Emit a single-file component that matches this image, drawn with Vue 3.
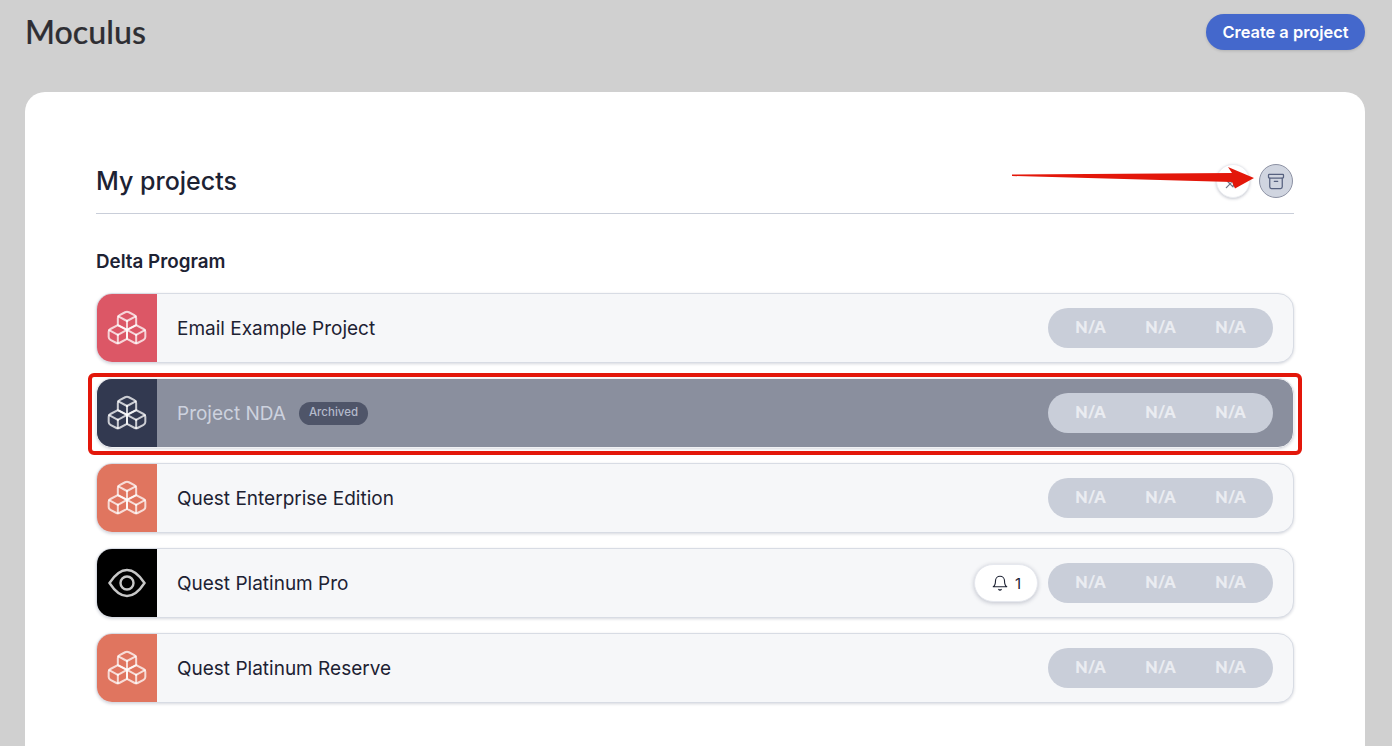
<script setup>
const rows = [
  { name: 'Email Example Project', color: '#dc5766', icon: 'boxes' },
  { name: 'Project NDA', color: '#323950', icon: 'boxes', archived: true },
  { name: 'Quest Enterprise Edition', color: '#e0755f', icon: 'boxes' },
  { name: 'Quest Platinum Pro', color: '#000000', icon: 'eye', alerts: 1 },
  { name: 'Quest Platinum Reserve', color: '#e0755f', icon: 'boxes' },
]
</script>

<template>
  <div class="page">
    <header class="top">
      <h1 class="brand">Moculus</h1>
      <button class="create">Create a project</button>
    </header>

    <main class="card">
      <div class="head">
        <h2>My projects</h2>
        <div class="tools">
          <button class="tool">
            <svg width="20" height="20" viewBox="0 0 24 24" fill="none" stroke="#6d7486" stroke-width="1.5" stroke-linecap="round" stroke-linejoin="round">
              <path d="M4 20l6-6" />
              <path d="M14 4l6 6-3 1-4 4-1 4-7-7 4-1 4-4z" />
            </svg>
          </button>
          <button class="tool active">
            <svg width="20" height="20" viewBox="0 0 24 24" fill="none" stroke="#56617f" stroke-width="1.5" stroke-linecap="round" stroke-linejoin="round">
              <rect x="3" y="4" width="18" height="4.5" rx="1" />
              <path d="M4.5 8.5V19a2 2 0 0 0 2 2h11a2 2 0 0 0 2-2V8.5" />
              <path d="M10 12.5h4" />
            </svg>
          </button>
          <svg class="arrow" width="246" height="30" viewBox="0 0 246 30">
            <path d="M0 10.5 L0 12 L220 18 L223 24.5 L242 14 L216 3 L220 9 Z" fill="#e3170a" />
          </svg>
        </div>
      </div>

      <h3 class="group">Delta Program</h3>

      <ul class="rows">
        <li v-for="row in rows" :key="row.name" class="row" :class="{ archived: row.archived }">
          <div class="thumb" :style="{ background: row.color }">
            <svg v-if="row.icon === 'boxes'" class="boxes" viewBox="0 0 24 24" preserveAspectRatio="none" fill="none" stroke="#fff" stroke-opacity="0.75" stroke-linecap="round" stroke-linejoin="round">
              <path d="M2.97 12.92A2 2 0 0 0 2 14.63v3.24a2 2 0 0 0 .97 1.71l3 1.8a2 2 0 0 0 2.06 0L12 19v-5.5l-5-3-4.03 2.42Z" />
              <path d="m7 16.5-4.74-2.85" />
              <path d="m7 16.5 5-3" />
              <path d="M7 16.5v5.17" />
              <path d="M12 13.5V19l3.97 2.38a2 2 0 0 0 2.06 0l3-1.8a2 2 0 0 0 .97-1.71v-3.24a2 2 0 0 0-.97-1.71L17 10.5l-5 3Z" />
              <path d="m17 16.5-5-3" />
              <path d="m17 16.5 4.74-2.85" />
              <path d="M17 16.5v5.17" />
              <path d="M7.97 4.42A2 2 0 0 0 7 6.13v4.37l5 3 5-3V6.13a2 2 0 0 0-.97-1.71l-3-1.8a2 2 0 0 0-2.06 0l-3 1.8Z" />
              <path d="M12 8 7.26 5.15" />
              <path d="m12 8 4.74-2.85" />
              <path d="M12 13.5V8" />
            </svg>
            <svg v-else class="eye" width="38" height="30" viewBox="0 0 38 30" fill="none" stroke="#fff" stroke-opacity="0.78" stroke-width="2.4">
              <path d="M1.5 15 C8 5 14 2 19 2 C24 2 30 5 36.5 15 C30 25 24 28 19 28 C14 28 8 25 1.5 15 Z" />
              <circle cx="19" cy="15" r="6.5" />
            </svg>
          </div>
          <div class="name">{{ row.name }}</div>
          <span v-if="row.archived" class="tag">Archived</span>
          <div class="spacer"></div>
          <button v-if="row.alerts" class="alerts">
            <svg width="18" height="18" viewBox="0 0 24 24" fill="none" stroke="#1d2233" stroke-width="1.5" stroke-linecap="round" stroke-linejoin="round">
              <path d="M6 9a6 6 0 0 1 12 0c0 6 3 8 3 8H3s3-2 3-8" />
              <path d="M10.3 20.5a2 2 0 0 0 3.4 0" />
            </svg>
            <span>{{ row.alerts }}</span>
          </button>
          <div class="stats">
            <span>N/A</span><span>N/A</span><span>N/A</span>
          </div>
          <div v-if="row.archived" class="marker"></div>
        </li>
      </ul>
    </main>
  </div>
</template>

<style>
html, body { margin: 0; background: #d0d0d0; overflow: hidden; }
</style>

<style scoped>
* { box-sizing: border-box; }
.page {
  height: 746px;
  overflow: hidden;
  padding: 0 27px 0 25px;
  font-family: Inter, "Liberation Sans", sans-serif;
  color: #1d2233;
}
.top {
  height: 92px;
  display: flex;
  justify-content: space-between;
  align-items: flex-start;
}
.brand {
  margin: 13px 0 0;
  font-family: Lato, sans-serif;
  font-size: 32.2px;
  line-height: 38px;
  font-weight: 500;
  color: #2e2e33;
  -webkit-text-stroke: 0.2px #2e2e33;
}
.create {
  margin: 14px 0 0;
  width: 159px;
  height: 36px;
  border: 0;
  border-radius: 18px;
  background: #4468cc;
  color: #fff;
  font: 600 16.4px/36px Inter, sans-serif;
  padding: 0;
  box-shadow: 0 1px 3px rgba(0, 0, 0, 0.15);
}
.card {
  background: #fff;
  border-radius: 20px 20px 0 0;
  height: 700px;
  padding: 71px 71.5px 0 71px;
}
.head {
  height: 51px;
  display: flex;
  justify-content: space-between;
  align-items: flex-start;
  border-bottom: 1px solid #c9ced9;
}
.head h2 {
  margin: 1px 0 0;
  font-size: 25px;
  line-height: 34px;
  font-weight: 500;
}
.tools {
  position: relative;
  display: flex;
  gap: 9px;
  margin: 1px 0.5px 0 0;
}
.tool {
  width: 34px;
  height: 34px;
  padding: 0;
  border-radius: 50%;
  border: 1px solid #eceef2;
  background: #fff;
  display: flex;
  align-items: center;
  justify-content: center;
  box-shadow: 0 1px 3px rgba(30, 40, 70, 0.25);
}
.tool.active {
  background: #d0d5e0;
  border-color: #8d92a4;
  box-shadow: none;
}
.arrow {
  position: absolute;
  right: 35px;
  top: 0;
}
.group {
  margin: 36px 0 0;
  font-size: 18.8px;
  line-height: 24px;
  font-weight: 600;
}
.rows {
  list-style: none;
  margin: 19px 0 0;
  padding: 0;
  display: flex;
  flex-direction: column;
  gap: 15px;
}
.row {
  position: relative;
  height: 70px;
  display: flex;
  align-items: center;
  padding-right: 19.5px;
  background: #f6f7f9;
  border: 1px solid #d8dce4;
  border-radius: 16px;
  box-shadow: 0 1px 3px rgba(30, 40, 70, 0.18);
}
.thumb {
  align-self: stretch;
  width: 60px;
  border-radius: 15px 0 0 15px;
  display: flex;
  align-items: center;
  justify-content: center;
}
.boxes {
  width: 44px;
  height: 39px;
  margin: -2px 1px 0 0;
}
.eye {
  margin-right: 1px;
}
.boxes path {
  stroke-width: 2px;
  vector-effect: non-scaling-stroke;
}
.name {
  margin-left: 20px;
  padding-top: 1px;
  font-size: 19px;
  line-height: 28px;
}
.tag {
  margin-left: 13px;
  height: 23px;
  padding: 0 10px;
  border-radius: 12px;
  background: #4f5569;
  color: #b4bacb;
  font-size: 11.5px;
  font-weight: 500;
  line-height: 21px;
}
.spacer { flex: 1; }
.alerts {
  display: flex;
  align-items: center;
  gap: 6px;
  height: 38px;
  width: 64px;
  margin-right: 10px;
  padding: 0 0 0 16px;
  border: 1px solid #e6e8ee;
  border-radius: 19px;
  background: #fff;
  color: #1d2233;
  font: 400 15px Inter, sans-serif;
  box-shadow: 0 1px 4px rgba(30, 40, 70, 0.25);
}
.stats {
  display: flex;
  width: 225px;
  height: 40px;
  padding: 0 7.5px;
  border-radius: 20px;
  background: #c9ced9;
}
.stats span {
  flex: 1;
  text-align: center;
  font-family: Lato, sans-serif;
  font-size: 16px;
  font-weight: 800;
  line-height: 38px;
  color: #eaecf1;
}
.row.archived {
  background: #8a8f9e;
  border-color: #f0f1f4;
}
.row.archived .name { color: #cdd2de; }
.marker {
  position: absolute;
  top: -6px;
  bottom: -8px;
  left: -9px;
  right: -9px;
  border: 4px solid #e3170a;
  border-radius: 6px;
  pointer-events: none;
}
</style>
